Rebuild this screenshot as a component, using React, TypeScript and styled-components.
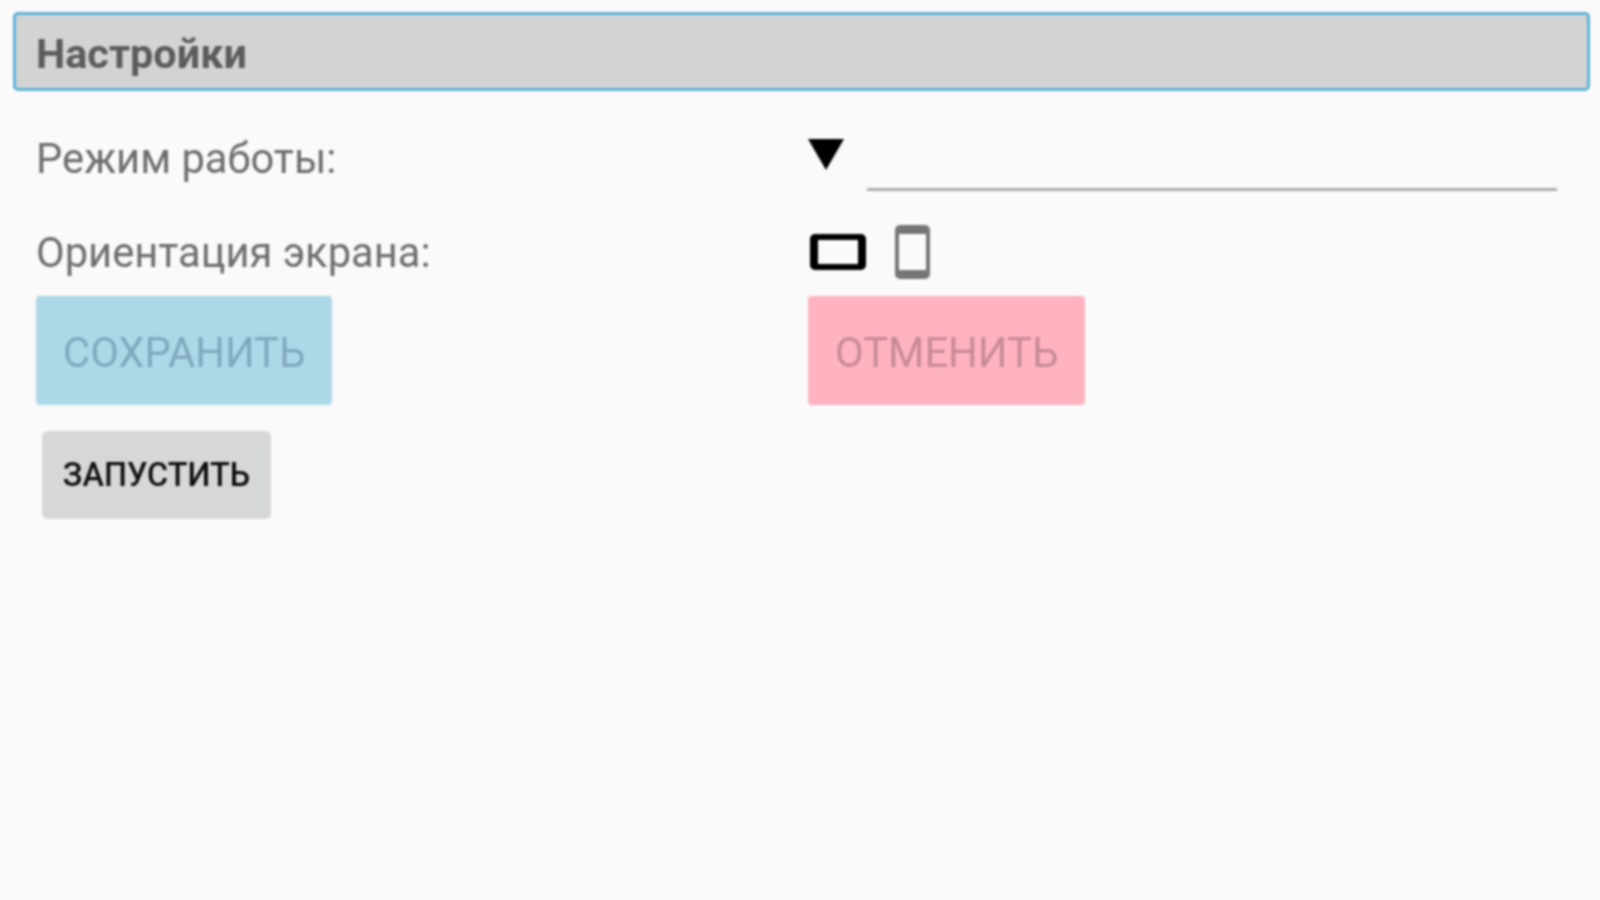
import styled, { createGlobalStyle } from 'styled-components';

const GlobalStyle = createGlobalStyle`
  html, body {
    margin: 0;
    padding: 0;
    height: 100%;
    background: #fafafa;
  }
`;

const App = () => {
  return (
    <>
      <GlobalStyle />
      <Page>
        <Header>Настройки</Header>
        <Form>
          <Label>Режим работы:</Label>
          <SelectRow>
            <SelectArrow />
            <SelectLine />
          </SelectRow>
          <Label>Ориентация экрана:</Label>
          <IconRow>
            <LandscapeIcon />
            <PortraitIcon />
          </IconRow>
          <ActionButton $bg='#acd8e8' $color='#80aabc'>
            Сохранить
          </ActionButton>
          <ActionButton $bg='#ffb3c0' $color='#c98a98'>
            Отменить
          </ActionButton>
        </Form>
        <RunButton>Запустить</RunButton>
      </Page>
    </>
  );
};

const Page = styled.div`
  padding: 12px 10px 0 13px;
  font-family: Roboto, 'Noto Sans', sans-serif;
  filter: blur(0.8px);
`;

const Header = styled.div`
  box-sizing: border-box;
  height: 79px;
  padding-left: 20px;
  border: 3px solid #5fb4d6;
  border-radius: 5px;
  background: #d3d3d3;
  color: #5c5c5c;
  font-size: 41.4px;
  font-weight: 700;
  line-height: 79px;
`;

const Form = styled.div`
  display: grid;
  grid-template-columns: 772px 1fr;
  grid-template-rows: 96px 91px 105px;
  align-items: center;
  justify-items: start;
  margin-top: 20px;
  padding-left: 23px;
`;

const Label = styled.div`
  color: #6e6e6e;
  font-size: 41.7px;
  line-height: 48px;
`;

const SelectRow = styled.div`
  display: flex;
  align-items: flex-start;
  gap: 23px;
  width: 749px;
  height: 80px;
`;

const SelectArrow = styled.div`
  flex: none;
  width: 0;
  height: 0;
  margin-top: 20px;
  border-top: 31px solid #000;
  border-left: 18px solid transparent;
  border-right: 18px solid transparent;
`;

const SelectLine = styled.div`
  width: 690px;
  height: 3px;
  margin-top: 69px;
  background: #adadad;
`;

const IconRow = styled.div`
  display: flex;
  align-items: center;
  gap: 29px;
  padding-left: 2px;
  margin-bottom: 2px;
`;

const LandscapeIcon = styled.div`
  box-sizing: border-box;
  width: 56px;
  height: 36px;
  border: solid #000;
  border-width: 6px 8px;
  border-radius: 5px;
  background: #fafafa;
`;

const PortraitIcon = styled.div`
  box-sizing: border-box;
  width: 35px;
  height: 54px;
  border: solid #767676;
  border-width: 9px 4px;
  border-radius: 5px;
  background: #fafafa;
`;

const ActionButton = styled.div<{ $bg: string; $color: string }>`
  display: flex;
  align-items: center;
  box-sizing: border-box;
  height: 109px;
  padding: 3px 27px 0;
  border-radius: 4px;
  background: ${({ $bg }) => $bg};
  color: ${({ $color }) => $color};
  font-size: 41.7px;
  text-transform: uppercase;
`;

const RunButton = styled.div`
  display: flex;
  align-items: center;
  justify-content: center;
  box-sizing: border-box;
  width: 229px;
  height: 88px;
  margin: 28px 0 0 29px;
  border-radius: 6px;
  background: #d6d7d7;
  color: #111;
  font-size: 32.4px;
  font-weight: 500;
  text-transform: uppercase;
`;

export default App;
